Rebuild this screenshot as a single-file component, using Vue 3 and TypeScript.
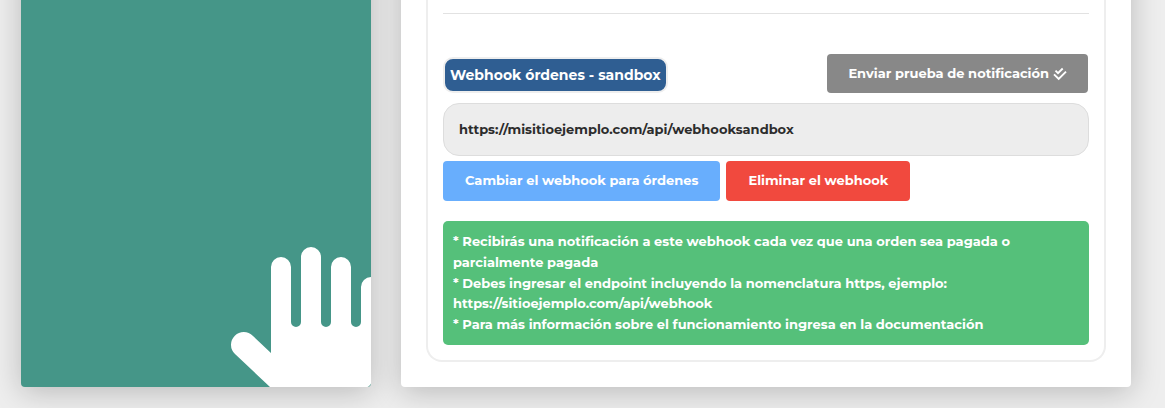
<script setup lang="ts">
import { ref } from 'vue'

const webhookUrl = ref<string>('https://misitioejemplo.com/api/webhooksandbox')

const notes: string[] = [
  '* Recibirás una notificación a este webhook cada vez que una orden sea pagada o parcialmente pagada',
  '* Debes ingresar el endpoint incluyendo la nomenclatura https, ejemplo: https://sitioejemplo.com/api/webhook',
  '* Para más información sobre el funcionamiento ingresa en la documentación',
]
</script>

<template>
  <div class="page">
    <aside class="side-card">
      <svg class="hand" width="140" height="140" viewBox="0 0 140 140" aria-hidden="true">
        <path
          fill="#fff"
          d="M40 140V20a10 10 0 0 1 20 0V75a5 5 0 0 0 10 0V10a10 10 0 0 1 20 0V75a5 5 0 0 0 10 0V20a10 10 0 0 1 20 0V75a5 5 0 0 0 10 0V40a10 10 0 0 1 10 -10V137L137 140Z"
        />
        <path
          fill="#fff"
          d="M39 140L4 107A12.8 12.8 0 0 1 0 97.500A12.800 12.800 0 0 1 12.800 85Q18 85 22 89L41 107V140Z"
        />
      </svg>
    </aside>

    <main class="main-card">
      <section class="panel">
        <hr class="divider" />

        <div class="heading">
          <label class="badge" for="webhook-url">Webhook órdenes - sandbox</label>
          <button type="button" class="btn btn-test">
            Enviar prueba de notificación
            <svg class="checks" width="14" height="14" viewBox="0 0 14 14" aria-hidden="true">
              <path
                d="M2.500 3.700L5 6.200L9.700 1.500M1 7.300L5.700 12L13 4.700"
                fill="none"
                stroke="currentColor"
                stroke-width="1.900"
              />
            </svg>
          </button>
        </div>

        <input id="webhook-url" v-model="webhookUrl" class="url" type="text" readonly />

        <div class="actions">
          <button type="button" class="btn btn-change">Cambiar el webhook para órdenes</button>
          <button type="button" class="btn btn-delete">Eliminar el webhook</button>
        </div>

        <div class="notice">
          <p v-for="note in notes" :key="note">{{ note }}</p>
        </div>
      </section>
    </main>
  </div>
</template>

<style>
body {
  margin: 0;
  background: #eee;
}
</style>

<style scoped>
.page,
.page * {
  box-sizing: border-box;
}

.page {
  display: grid;
  grid-template-columns: 350fr 730fr;
  gap: 30px;
  padding: 0 34px 21px 21px;
  overflow: hidden;
  background: #eee;
  font-family: Montserrat, Inter, 'Liberation Sans', sans-serif;
  font-size: 13px;
  font-weight: 700;
}

.side-card,
.main-card {
  margin-top: -40px;
  border-radius: 4px;
  box-shadow: 0 5px 30px rgba(0, 0, 0, 0.22);
}

.side-card {
  display: flex;
  align-items: flex-end;
  justify-content: flex-end;
  overflow: hidden;
  background: #459688;
}

.hand {
  display: block;
}

.main-card {
  padding: 0 25px 25px;
  background: #fff;
}

.panel {
  padding: 53px 15px 15px;
  border: 2px solid #eee;
  border-top: 0;
  border-radius: 0 0 16px 16px;
}

.divider {
  height: 1px;
  margin: 0 0 40px;
  border: 0;
  background: #e2e2e2;
}

.heading {
  display: flex;
  align-items: flex-start;
  justify-content: space-between;
  margin-bottom: 10px;
  padding-right: 1px;
}

.badge {
  margin-top: 3px;
  padding: 0 5px;
  border: 2px solid #eee;
  border-radius: 10px;
  background: #2f5e92;
  color: #fff;
  font-size: 14px;
  line-height: 32px;
}

.btn {
  display: inline-flex;
  align-items: center;
  justify-content: center;
  gap: 4px;
  height: 40px;
  padding: 0 22px 2px;
  border: 0;
  border-radius: 4px;
  color: #fff;
  font: inherit;
  cursor: pointer;
}

.btn-test {
  height: 39px;
  padding: 0 21px 1px;
  background: #888;
}

.checks {
  margin-top: 2px;
}

.btn-change {
  background: #68aefd;
}

.btn-delete {
  background: #f1493e;
}

.url {
  display: block;
  width: 100%;
  height: 53px;
  padding: 0 15px 2px;
  border: 1px solid #ddd;
  border-radius: 16px;
  background: #ededed;
  color: #2c2c2c;
  font: inherit;
}

.actions {
  display: flex;
  gap: 6px;
  margin: 5px 0 20px;
}

.notice {
  padding: 10px;
  border-radius: 5px;
  background: #55c07a;
  color: #fff;
  line-height: 1.6;
}

.notice p {
  margin: 0;
}
</style>
